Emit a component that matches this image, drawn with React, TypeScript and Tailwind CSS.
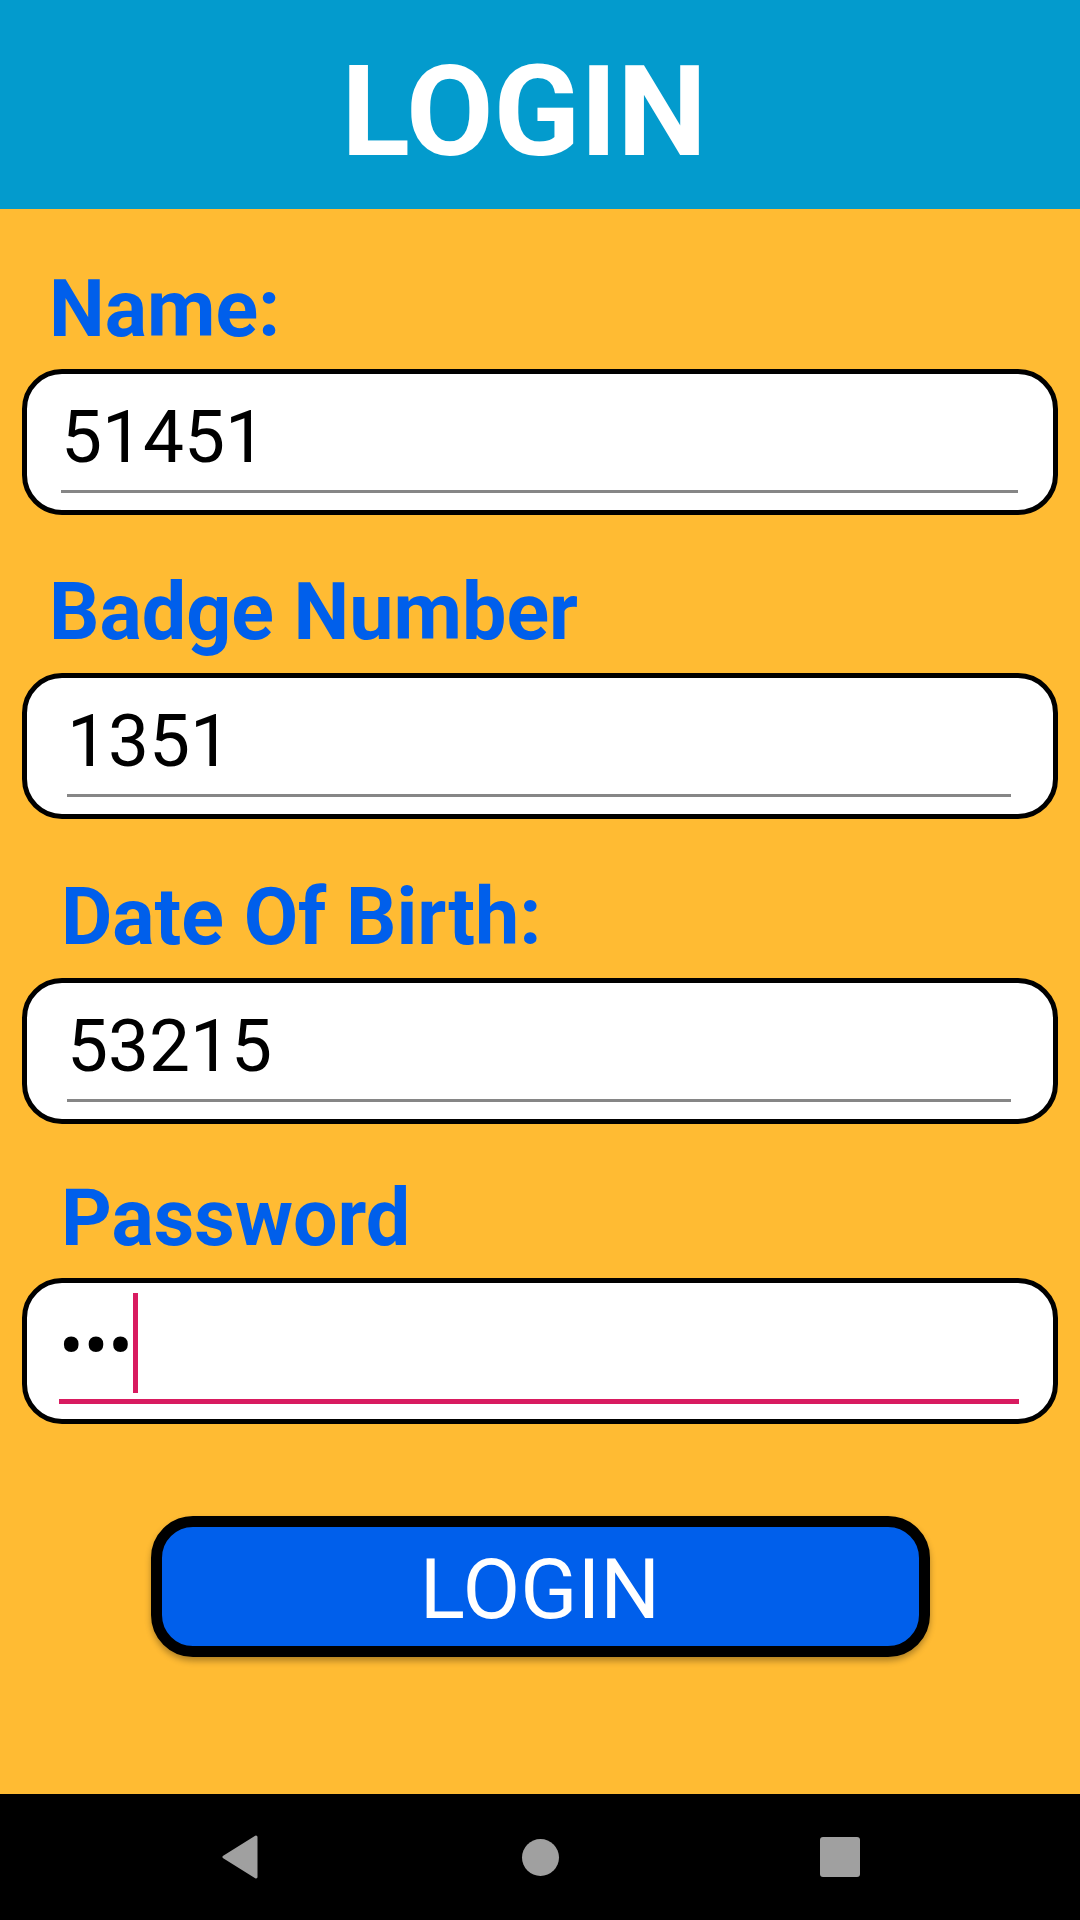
import React from 'react';

const fields = [
    { label: 'Name:', value: '51451', labelClass: 'mt-[60px] ml-[27px]', boxClass: 'mt-[20px]', padClass: 'pl-[34px] pr-[35px]' },
    { label: 'Badge Number', value: '1351', labelClass: 'mt-[57px] ml-[27px]', boxClass: 'mt-[21px]', padClass: 'pl-[40px] pr-[42px]' },
    { label: 'Date Of Birth:', value: '53215', labelClass: 'mt-[58px] ml-[39px]', boxClass: 'mt-[21px]', padClass: 'pl-[40px] pr-[42px]' },
];

export default function App() {
    return (
        <div className="flex h-[1920px] w-[1080px] flex-col overflow-hidden bg-[#FFBB33] font-['Roboto',sans-serif]">
            {/* title bar */}
            <div className="flex h-[209px] shrink-0 justify-center bg-[#039BCD] pt-[48px] pr-[32px]">
                <h1 className="text-[127px] font-bold leading-none text-white">LOGIN</h1>
            </div>

            <div className="flex flex-1 flex-col px-[22px]">
                {fields.map((f) => (
                    <div key={f.label} className="flex flex-col">
                        <div className={`${f.labelClass} text-[79px] font-bold leading-[80px] text-[#005FEB]`}>{f.label}</div>
                        <div className={`${f.boxClass} h-[146px] rounded-[40px] border-[5px] border-black bg-white pt-[27px] ${f.padClass}`}>
                            <div className="text-[73px] leading-none text-black">{f.value}</div>
                            <div className="mt-[16px] h-[3px] bg-[#868686]" />
                        </div>
                    </div>
                ))}

                <div className="flex flex-col">
                    <div className="mt-[54px] ml-[39px] text-[79px] font-bold leading-[80px] text-[#005FEB]">Password</div>
                    <div className="mt-[20px] h-[146px] rounded-[40px] border-[5px] border-black bg-white pt-[27px] pl-[32px] pr-[34px]">
                        <div className="relative text-[73px] leading-none text-black">
                            <span>•••</span>
                            <span className="absolute left-[74px] top-[-17px] h-[100px] w-[5px] bg-[#D81B60]" />
                        </div>
                        <div className="mt-[16px] h-[5px] bg-[#D81B60]" />
                    </div>
                </div>

                <div className="mt-[92px] flex justify-center">
                    <button className="flex h-[141px] w-[779px] items-center justify-center rounded-[42px] border-[11px] border-black bg-[#005FEB] pt-[7px] text-[84px] leading-none text-white shadow-[0_4px_6px_rgba(0,0,0,0.3)]">
                        LOGIN
                    </button>
                </div>
            </div>

            {/* system nav bar */}
            <div className="flex h-[126px] shrink-0 items-center justify-center gap-[180px] bg-black">
                <div className="flex w-[120px] justify-center">
                    <svg width="40" height="46" viewBox="0 0 40 46">
                        <path d="M36 3 L4 23 L36 43 Z" fill="#A0A0A0" stroke="#A0A0A0" strokeWidth="3" strokeLinejoin="round" />
                    </svg>
                </div>
                <div className="flex w-[120px] justify-center">
                    <div className="h-[37px] w-[37px] rounded-full bg-[#A0A0A0]" />
                </div>
                <div className="flex w-[120px] justify-center">
                    <div className="h-[40px] w-[40px] rounded-[3px] bg-[#A0A0A0]" />
                </div>
            </div>
        </div>
    );
}
